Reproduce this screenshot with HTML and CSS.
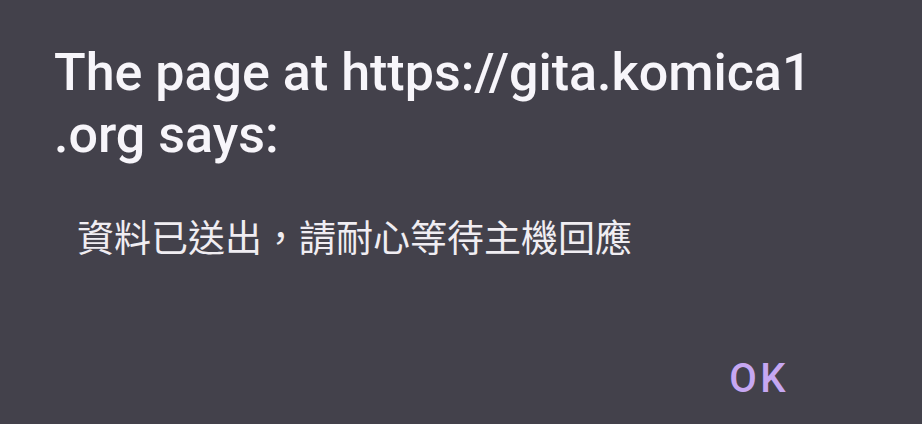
FILE: index.html
```html
<!DOCTYPE html>
<html lang="zh-Hant">
<head>
  <meta charset="UTF-8" />
  <title>Alert</title>
  <link rel="stylesheet" href="styles.css">
</head>
<body>
  <div class="dialog">
    <h1 class="title">The page at https://gita.komica1 .org says:</h1>
    <p class="message">資料已送出，請耐心等待主機回應</p>
    <div class="actions">
      <button class="ok" type="button">OK</button>
    </div>
  </div>
</body>
</html>
```

FILE: styles.css
```css
html, body {
  margin: 0;
  height: 100%;
}

body {
  background: #43414b;
  font-family: Roboto, "Noto Sans CJK SC", sans-serif;
  color: #f7f5fa;
}

.dialog {
  padding: 42px 56px 0 54px;
  box-sizing: border-box;
  height: 100%;
  display: flex;
  flex-direction: column;
}

.title {
  margin: 0;
  width: 800px;
  font-size: 52px;
  font-weight: 500;
  line-height: 62px;
}

.message {
  margin: 46px 0 0 23px;
  font-family: "Noto Sans CJK SC", sans-serif;
  font-size: 37px;
  line-height: 48px;
  color: #f0edf2;
}

.actions {
  display: flex;
  justify-content: flex-end;
  margin-top: auto;
  padding: 0 77px 22px 0;
}

.ok {
  background: none;
  border: none;
  padding: 0;
  font-family: Roboto, sans-serif;
  font-weight: 500;
  font-size: 40px;
  letter-spacing: 3.5px;
  color: #c6a7f2;
}
```
